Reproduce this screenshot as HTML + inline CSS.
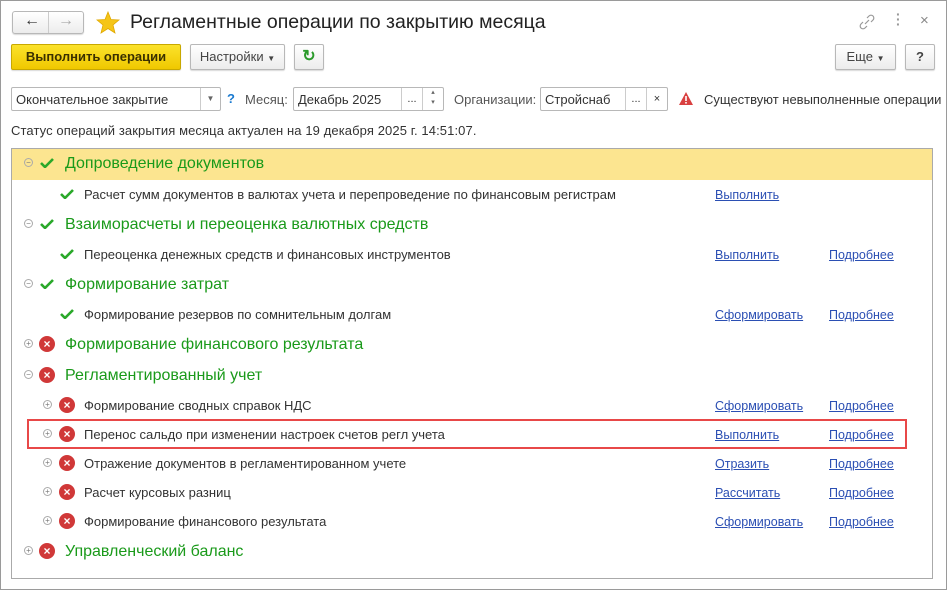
<!DOCTYPE html><html><head><meta charset="utf-8"><style>
*{margin:0;padding:0;box-sizing:border-box}
body{width:947px;height:590px;background:#fff;font-family:"Liberation Sans",Arial,sans-serif;color:#333;position:relative;overflow:hidden;font-size:13px}
.a{position:absolute;white-space:nowrap}
.frame{position:absolute;left:0;top:0;width:947px;height:590px;border:1px solid #9a9a9a}
.btn{position:absolute;border:1px solid #b8b8b8;border-radius:2px;background:linear-gradient(#fff,#ececec);box-shadow:0 1px 1px rgba(0,0,0,.15);font-size:13px;color:#444;text-align:center}
.inp{position:absolute;border:1px solid #b8b8b8;border-radius:2px;background:#fff;height:24px;font-size:13px;color:#333}
.g{font-size:16px;color:#1a9a1a}
.lnk{color:#2b4fb3;text-decoration:underline;font-size:12.5px}
.ck{width:14px;height:10px}
.x{width:16px;height:16px;border-radius:50%;background:#d03838;color:#fff;font-size:12px;font-weight:bold;text-align:center;line-height:16px}
.pm{width:9px;height:9px;border:1px solid #aaa;border-radius:50%;font-size:8px;line-height:7px;text-align:center;color:#777}
</style></head><body>
<div class="frame"></div>
<div class="btn" style="left:12px;top:11px;width:72px;height:23px;border-radius:3px"></div>
<div class="a" style="left:48px;top:12px;height:21px;border-left:1px solid #ccc"></div>
<div class="a" style="left:24px;top:12px;font-size:16px;color:#333">&#8592;</div>
<div class="a" style="left:58px;top:12px;font-size:16px;color:#aaa">&#8594;</div>
<svg class="a" style="left:96px;top:11px" width="24" height="23" viewBox="0 0 24 23"><polygon points="12,1 15,8.5 23,9 17,14 19,22 12,17.5 5,22 7,14 1,9 9,8.5" fill="#f5c518" stroke="#e0a800" stroke-width=".8"/></svg>
<div class="a" style="left:130px;top:11px;font-size:19.5px;color:#222">Регламентные операции по закрытию месяца</div>
<svg class="a" style="left:858px;top:13px" width="18" height="18"><path d="M7 11l4-4M5 9l-2 2a2.5 2.5 0 004 4l2-2M13 9l2-2a2.5 2.5 0 00-4-4L9 5" stroke="#999" fill="none" stroke-width="1.2"/></svg>
<div class="a" style="left:896px;top:12px;color:#999;font-size:14px;line-height:5px;font-weight:bold">·<br>·<br>·</div>
<div class="a" style="left:920px;top:12px;color:#888;font-size:15px">×</div>
<div class="btn" style="left:11px;top:44px;width:170px;height:26px;background:linear-gradient(#fbe22b,#f0c800);border-color:#c8a800;font-weight:bold;color:#3a3000;line-height:24px">Выполнить операции</div>
<div class="btn" style="left:190px;top:44px;width:95px;height:26px;line-height:24px">Настройки <span style="font-size:8px">▼</span></div>
<div class="btn" style="left:294px;top:44px;width:30px;height:26px;line-height:24px;color:#2a9a2a;font-weight:bold;font-size:16px">&#8635;</div>
<div class="btn" style="left:835px;top:44px;width:61px;height:26px;line-height:24px">Еще <span style="font-size:8px">▼</span></div>
<div class="btn" style="left:905px;top:44px;width:30px;height:26px;line-height:24px;font-weight:bold">?</div>
<div class="inp" style="left:11px;top:87px;width:210px"><span class="a" style="left:4px;top:4px">Окончательное закрытие</span><span class="a" style="left:188px;top:0;height:22px;border-left:1px solid #ccc;width:20px;text-align:center;font-size:8px;line-height:22px;color:#666">▼</span></div>
<div class="a" style="left:227px;top:91px;color:#1a7ad0;font-weight:bold;font-size:13px">?</div>
<div class="a" style="left:245px;top:92px;font-size:13px;color:#555">Месяц:</div>
<div class="inp" style="left:293px;top:87px;width:151px"><span class="a" style="left:4px;top:4px">Декабрь 2025</span><span class="a" style="left:107px;top:0;height:22px;border-left:1px solid #ccc;width:21px;text-align:center;line-height:22px;font-size:11px">...</span><span class="a" style="left:128px;top:0;height:22px;border-left:1px solid #ccc;width:21px;text-align:center;font-size:7px;line-height:10px;color:#666">▴<br>▾</span></div>
<div class="a" style="left:454px;top:92px;font-size:13px;color:#555">Организации:</div>
<div class="inp" style="left:540px;top:87px;width:128px"><span class="a" style="left:4px;top:4px">Стройснаб</span><span class="a" style="left:84px;top:0;height:22px;border-left:1px solid #ccc;width:21px;text-align:center;line-height:22px;font-size:11px">...</span><span class="a" style="left:105px;top:0;height:22px;border-left:1px solid #ccc;width:21px;text-align:center;line-height:22px;font-size:11px">×</span></div>
<svg class="a" style="left:678px;top:91px" width="16" height="15"><polygon points="8,1 15,14 1,14" fill="#d94040"/><rect x="7.2" y="5" width="1.6" height="5" fill="#fff"/><rect x="7.2" y="11" width="1.6" height="1.6" fill="#fff"/></svg>
<div class="a" style="left:704px;top:92px;font-size:13px;color:#333">Существуют невыполненные операции</div>
<div class="a" style="left:11px;top:123px;font-size:13px;color:#333;letter-spacing:.1px">Статус операций закрытия месяца актуален на 19 декабря 2025 г. 14:51:07.</div>
<div class="a" style="left:11px;top:148px;width:922px;height:431px;border:1px solid #aaa"></div>
<div class="a" style="left:12px;top:149px;width:920px;height:31px;background:#fce590"></div>
<div class="a" style="left:27px;top:419px;width:880px;height:30px;border:2px solid #e84848"></div>

<div class="a pm" style="left:24px;top:158px">−</div><svg class="a ck" style="left:40px;top:158px" viewBox="0 0 14 10"><path d="M1 5l4 4 8-8" stroke="#2aa82a" stroke-width="2.6" fill="none"/></svg><div class="a g" style="left:65px;top:155px">Допроведение документов</div>
<svg class="a ck" style="left:60px;top:189px" viewBox="0 0 14 10"><path d="M1 5l4 4 8-8" stroke="#2aa82a" stroke-width="2.6" fill="none"/></svg><div class="a" style="left:84px;top:187px">Расчет сумм документов в валютах учета и перепроведение по финансовым регистрам</div><div class="a lnk" style="left:715px;top:188px">Выполнить</div>

<div class="a pm" style="left:24px;top:219px">−</div><svg class="a ck" style="left:40px;top:219px" viewBox="0 0 14 10"><path d="M1 5l4 4 8-8" stroke="#2aa82a" stroke-width="2.6" fill="none"/></svg><div class="a g" style="left:65px;top:216px">Взаиморасчеты и переоценка валютных средств</div>
<svg class="a ck" style="left:60px;top:249px" viewBox="0 0 14 10"><path d="M1 5l4 4 8-8" stroke="#2aa82a" stroke-width="2.6" fill="none"/></svg><div class="a" style="left:84px;top:247px">Переоценка денежных средств и финансовых инструментов</div><div class="a lnk" style="left:715px;top:248px">Выполнить</div><div class="a lnk" style="left:829px;top:248px">Подробнее</div>

<div class="a pm" style="left:24px;top:279px">−</div><svg class="a ck" style="left:40px;top:279px" viewBox="0 0 14 10"><path d="M1 5l4 4 8-8" stroke="#2aa82a" stroke-width="2.6" fill="none"/></svg><div class="a g" style="left:65px;top:276px">Формирование затрат</div>
<svg class="a ck" style="left:60px;top:309px" viewBox="0 0 14 10"><path d="M1 5l4 4 8-8" stroke="#2aa82a" stroke-width="2.6" fill="none"/></svg><div class="a" style="left:84px;top:307px">Формирование резервов по сомнительным долгам</div><div class="a lnk" style="left:715px;top:308px">Сформировать</div><div class="a lnk" style="left:829px;top:308px">Подробнее</div>

<div class="a pm" style="left:24px;top:339px">+</div><div class="a x" style="left:39px;top:336px">×</div><div class="a g" style="left:65px;top:336px">Формирование финансового результата</div>
<div class="a pm" style="left:24px;top:370px">−</div><div class="a x" style="left:39px;top:367px">×</div><div class="a g" style="left:65px;top:367px">Регламентированный учет</div>

<div class="a pm" style="left:43px;top:400px">+</div><div class="a x" style="left:59px;top:397px">×</div><div class="a" style="left:84px;top:398px">Формирование сводных справок НДС</div><div class="a lnk" style="left:715px;top:399px">Сформировать</div><div class="a lnk" style="left:829px;top:399px">Подробнее</div>
<div class="a pm" style="left:43px;top:429px">+</div><div class="a x" style="left:59px;top:426px">×</div><div class="a" style="left:84px;top:427px">Перенос сальдо при изменении настроек счетов регл учета</div><div class="a lnk" style="left:715px;top:428px">Выполнить</div><div class="a lnk" style="left:829px;top:428px">Подробнее</div>
<div class="a pm" style="left:43px;top:458px">+</div><div class="a x" style="left:59px;top:455px">×</div><div class="a" style="left:84px;top:456px">Отражение документов в регламентированном учете</div><div class="a lnk" style="left:715px;top:457px">Отразить</div><div class="a lnk" style="left:829px;top:457px">Подробнее</div>
<div class="a pm" style="left:43px;top:487px">+</div><div class="a x" style="left:59px;top:484px">×</div><div class="a" style="left:84px;top:485px">Расчет курсовых разниц</div><div class="a lnk" style="left:715px;top:486px">Рассчитать</div><div class="a lnk" style="left:829px;top:486px">Подробнее</div>
<div class="a pm" style="left:43px;top:516px">+</div><div class="a x" style="left:59px;top:513px">×</div><div class="a" style="left:84px;top:514px">Формирование финансового результата</div><div class="a lnk" style="left:715px;top:515px">Сформировать</div><div class="a lnk" style="left:829px;top:515px">Подробнее</div>

<div class="a pm" style="left:24px;top:546px">+</div><div class="a x" style="left:39px;top:543px">×</div><div class="a g" style="left:65px;top:543px">Управленческий баланс</div>
</body></html>
